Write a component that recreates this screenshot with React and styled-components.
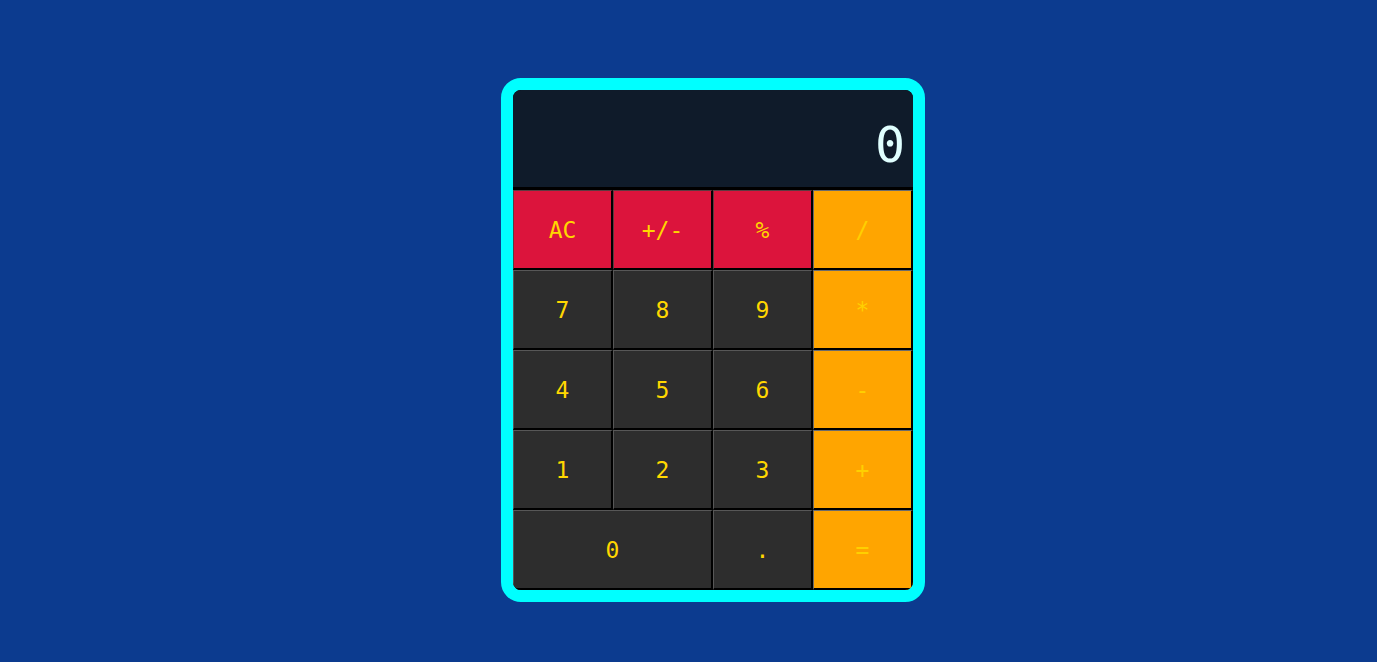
import React from "react";
import styled, { createGlobalStyle } from "styled-components";

const Global = createGlobalStyle`
  html, body { margin: 0; padding: 0; }
  body {
    background: #0c3b8f;
    font-family: "DejaVu Sans Mono", "Liberation Mono", monospace;
    height: 662px;
    overflow: hidden;
  }
`;

const Page = styled.div`
  display: flex;
  align-items: flex-start;
  padding: 78px 0 0 501px;
`;

const Calculator = styled.div`
  width: 400px;
  border: 12px solid #00ffff;
  border-radius: 20px;
  background: #000;
  overflow: hidden;
  display: flex;
  flex-direction: column;
  gap: 3px;
`;

const Display = styled.div`
  height: 97px;
  background: #0f1b2a;
  color: #e0ffff;
  font-size: 50px;
  display: flex;
  align-items: center;
  justify-content: flex-end;
  padding: 12px 8px 0 0;
  box-sizing: border-box;
`;

const Keys = styled.div`
  display: grid;
  grid-template-columns: repeat(4, 100px);
  grid-auto-rows: 80px;
`;

const bgs = { fn: "#dc143c", num: "#2d2d2d", op: "#ffa500" };
const lights = { fn: "#5e3a40", num: "#575757", op: "#6b6b6b" };

const Key = styled.button`
  grid-column: span ${(p) => p.$span || 1};
  background: ${(p) => bgs[p.$kind]};
  color: ${(p) => (p.$kind === "op" ? "#ffd000" : "#ffd700")};
  font-family: "DejaVu Sans Mono", "Liberation Mono", monospace;
  font-size: 23px;
  border: none;
  border-top: 1px solid ${(p) => lights[p.$kind]};
  border-left: 1px solid ${(p) => lights[p.$kind]};
  border-right: 2px solid #000;
  border-bottom: 2px solid #000;
  padding: 0;
  margin: 0;
  cursor: pointer;
`;

const rows = [
  [["AC", "fn"], ["+/-", "fn"], ["%", "fn"], ["/", "op"]],
  [["7", "num"], ["8", "num"], ["9", "num"], ["*", "op"]],
  [["4", "num"], ["5", "num"], ["6", "num"], ["-", "op"]],
  [["1", "num"], ["2", "num"], ["3", "num"], ["+", "op"]],
  [["0", "num", 2], [".", "num"], ["=", "op"]],
];

export default function App() {
  return (
    <>
      <Global />
      <Page>
        <Calculator>
          <Display>0</Display>
          <Keys>
            {rows.flat().map(([label, kind, span]) => (
              <Key key={label} $kind={kind} $span={span}>
                {label}
              </Key>
            ))}
          </Keys>
        </Calculator>
      </Page>
    </>
  );
}
